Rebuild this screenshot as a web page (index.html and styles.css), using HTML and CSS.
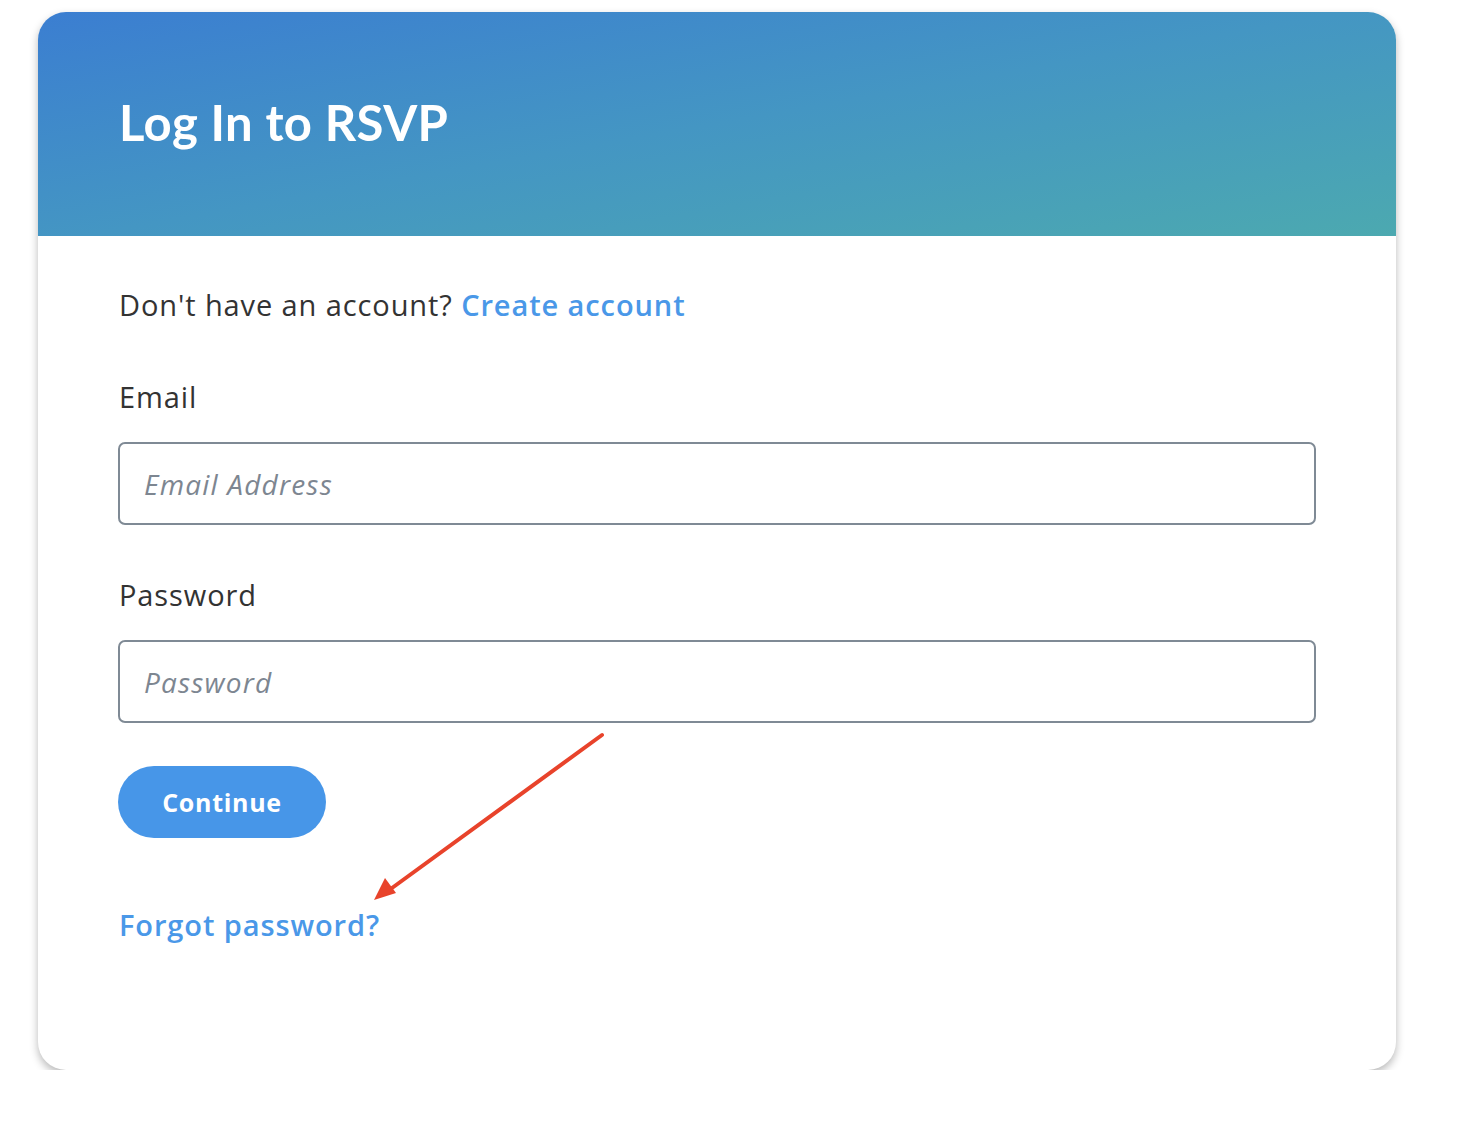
FILE: index.html
```html
<!DOCTYPE html>
<html lang="en">
<head>
<meta charset="utf-8">
<title>Log In to RSVP</title>
<link rel="stylesheet" href="styles.css">
</head>
<body>
<div class="card">
  <header class="card-header">
    <h1 class="title">Log In to RSVP</h1>
  </header>
  <form class="card-body">
    <p class="intro">Don't have an account? <a class="link" href="#">Create account</a></p>
    <label class="label label-email" for="email">Email</label>
    <input class="field" id="email" type="email" placeholder="Email Address">
    <label class="label label-password" for="password">Password</label>
    <input class="field" id="password" type="password" placeholder="Password">
    <button class="btn" type="button">Continue</button>
    <a class="link forgot" href="#">Forgot password?</a>
  </form>
  <svg class="annotation" width="260" height="180" viewBox="0 0 260 180">
    <line x1="234" y1="5" x2="24" y2="158" stroke="#e8432b" stroke-width="4" stroke-linecap="round"/>
    <polygon points="6,170 17,148 28,163" fill="#e8432b"/>
  </svg>
</div>
</body>
</html>
```
FILE: styles.css
```css
* { box-sizing: border-box; }
html, body { margin: 0; padding: 0; background: #ffffff; }
body {
  font-family: "Open Sans", Lato, "Liberation Sans", sans-serif;
  color: #333333;
}
.card {
  position: relative;
  margin: 12px 0 0 38px;
  width: 1358px;
  height: 1058px;
  border-radius: 28px;
  background: #ffffff;
  box-shadow: 0 4px 9px rgba(0, 0, 0, 0.28);
  overflow: hidden;
}
.card-header {
  height: 224px;
  display: flex;
  align-items: center;
  padding: 0 0 0 81px;
  background: linear-gradient(170deg, #3b7ed1 0%, #4496c3 50%, #4ca9b0 100%);
}
.title {
  margin: 0 0 4px 0;
  font-family: Lato, "Open Sans", sans-serif;
  font-size: 49px;
  font-weight: 700;
  color: #ffffff;
  letter-spacing: 0.4px;
}
.card-body {
  display: flex;
  flex-direction: column;
  align-items: flex-start;
  padding: 52px 80px 0 81px;
}
.intro {
  margin: 0;
  font-size: 29px;
  line-height: 34px;
  color: #333333;
  letter-spacing: 0.9px;
}
.link {
  color: #4a98e8;
  text-decoration: none;
  font-weight: 600;
}
.label {
  font-size: 29px;
  line-height: 34px;
  color: #333333;
  letter-spacing: 0.9px;
}
.label-email { margin-top: 58px; }
.label-password { margin-top: 53px; }
.field {
  margin-top: 28px;
  width: 1198px;
  height: 83px;
  margin-left: -1px;
  border: 2px solid #7f8a95;
  border-radius: 7px;
  padding: 0 24px;
  font-family: inherit;
  font-size: 28px;
  color: #333333;
  background: #ffffff;
  outline: none;
  letter-spacing: 1.2px;
}
.field::placeholder {
  color: #7d8691;
  font-style: italic;
}
.btn {
  margin-top: 43px;
  margin-left: -1px;
  width: 208px;
  height: 72px;
  border: none;
  border-radius: 36px;
  background: #4796e8;
  color: #ffffff;
  font-family: inherit;
  font-size: 25px;
  font-weight: 700;
  letter-spacing: 0.7px;
  cursor: pointer;
}
.forgot {
  margin-top: 70px;
  font-size: 29px;
  line-height: 34px;
  letter-spacing: 0.9px;
}
.annotation {
  position: absolute;
  left: 330px;
  top: 718px;
}
```
